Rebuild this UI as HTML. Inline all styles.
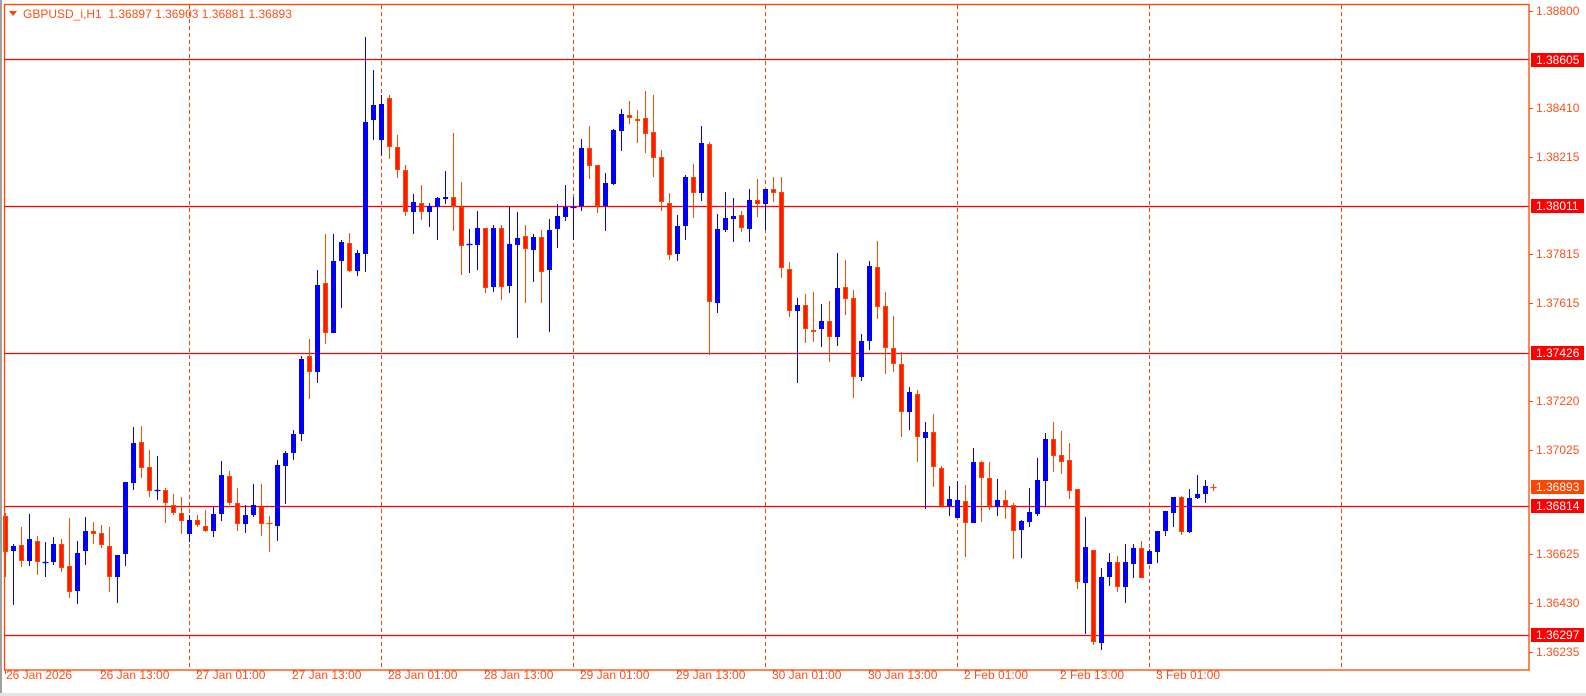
<!DOCTYPE html>
<html><head><meta charset="utf-8"><style>
html,body{margin:0;padding:0;background:#fff;width:1586px;height:696px;overflow:hidden;font-family:"Liberation Sans",sans-serif}
#c{position:absolute;left:0;top:0}
.t{position:absolute;font-size:12px;color:#ff4f1a;white-space:nowrap;line-height:14px}
.b{position:absolute;left:1531px;width:53px;height:14px;background:#ff0000;color:#fff;font-size:12px;line-height:14px;padding-left:5px;box-sizing:border-box}
</style></head><body>
<svg id="c" width="1586" height="696" xmlns="http://www.w3.org/2000/svg">
<rect x="0" y="0" width="2" height="696" fill="#a0a0a0"/>
<rect x="0" y="693" width="1586" height="3" fill="#e4e4e4"/>
<g id="grid" stroke="#ff4500" stroke-width="1" stroke-dasharray="4,3">
<line x1="189.5" y1="5" x2="189.5" y2="670"/><line x1="381.5" y1="5" x2="381.5" y2="670"/><line x1="573.5" y1="5" x2="573.5" y2="670"/><line x1="765.5" y1="5" x2="765.5" y2="670"/><line x1="957.5" y1="5" x2="957.5" y2="670"/><line x1="1149.5" y1="5" x2="1149.5" y2="670"/><line x1="1341.5" y1="5" x2="1341.5" y2="670"/>
</g>
<g stroke="#ff0000" stroke-width="1.3">
<line x1="4" y1="59.5" x2="1529" y2="59.5"/><line x1="4" y1="206.5" x2="1529" y2="206.5"/><line x1="4" y1="353.5" x2="1529" y2="353.5"/><line x1="4" y1="506.5" x2="1529" y2="506.5"/><line x1="4" y1="635.5" x2="1529" y2="635.5"/>
</g>
<g id="cd"></g>
<rect x="4.5" y="4.5" width="1524.5" height="665.5" fill="none" stroke="#ff4500" stroke-width="1.3"/>
<g stroke="#ff4500" stroke-width="1">
<line x1="1529" y1="11.5" x2="1533" y2="11.5"/><line x1="1529" y1="108.5" x2="1533" y2="108.5"/><line x1="1529" y1="157.5" x2="1533" y2="157.5"/><line x1="1529" y1="254.5" x2="1533" y2="254.5"/><line x1="1529" y1="303.5" x2="1533" y2="303.5"/><line x1="1529" y1="401.5" x2="1533" y2="401.5"/><line x1="1529" y1="450.5" x2="1533" y2="450.5"/><line x1="1529" y1="554.5" x2="1533" y2="554.5"/><line x1="1529" y1="603.5" x2="1533" y2="603.5"/><line x1="1529" y1="652.5" x2="1533" y2="652.5"/>
<line x1="5.5" y1="670" x2="5.5" y2="674"/><line x1="101.5" y1="670" x2="101.5" y2="674"/><line x1="197.5" y1="670" x2="197.5" y2="674"/><line x1="293.5" y1="670" x2="293.5" y2="674"/><line x1="389.5" y1="670" x2="389.5" y2="674"/><line x1="485.5" y1="670" x2="485.5" y2="674"/><line x1="581.5" y1="670" x2="581.5" y2="674"/><line x1="677.5" y1="670" x2="677.5" y2="674"/><line x1="773.5" y1="670" x2="773.5" y2="674"/><line x1="869.5" y1="670" x2="869.5" y2="674"/><line x1="965.5" y1="670" x2="965.5" y2="674"/><line x1="1061.5" y1="670" x2="1061.5" y2="674"/><line x1="1157.5" y1="670" x2="1157.5" y2="674"/>
</g>
<polygon points="9,11 17,11 13,16" fill="#ff4500"/>
</svg>
<div class="t" style="left:23px;top:7px">GBPUSD_i,H1&nbsp; 1.36897 1.36903 1.36881 1.36893</div>
<div class="t" style="left:1536px;top:4px">1.38800</div>
<div class="b" style="top:53px">1.38605</div>
<div class="t" style="left:1536px;top:101px">1.38410</div>
<div class="t" style="left:1536px;top:150px">1.38215</div>
<div class="b" style="top:199px">1.38011</div>
<div class="t" style="left:1536px;top:247px">1.37815</div>
<div class="t" style="left:1536px;top:296px">1.37615</div>
<div class="b" style="top:346px">1.37426</div>
<div class="t" style="left:1536px;top:394px">1.37220</div>
<div class="t" style="left:1536px;top:443px">1.37025</div>
<div class="b" style="top:480px;background:#ff4500">1.36893</div>
<div class="b" style="top:499px">1.36814</div>
<div class="t" style="left:1536px;top:547px">1.36625</div>
<div class="t" style="left:1536px;top:596px">1.36430</div>
<div class="b" style="top:628px">1.36297</div>
<div class="t" style="left:1536px;top:645px">1.36235</div>
<div class="t" style="left:6px;top:668px">26 Jan 2026</div>
<div class="t" style="left:100px;top:668px">26 Jan 13:00</div>
<div class="t" style="left:196px;top:668px">27 Jan 01:00</div>
<div class="t" style="left:292px;top:668px">27 Jan 13:00</div>
<div class="t" style="left:388px;top:668px">28 Jan 01:00</div>
<div class="t" style="left:484px;top:668px">28 Jan 13:00</div>
<div class="t" style="left:580px;top:668px">29 Jan 01:00</div>
<div class="t" style="left:676px;top:668px">29 Jan 13:00</div>
<div class="t" style="left:772px;top:668px">30 Jan 01:00</div>
<div class="t" style="left:868px;top:668px">30 Jan 13:00</div>
<div class="t" style="left:964px;top:668px">2 Feb 01:00</div>
<div class="t" style="left:1060px;top:668px">2 Feb 13:00</div>
<div class="t" style="left:1156px;top:668px">3 Feb 01:00</div>
<script>
// [top, bottom, high, low, color]
var A=[[468,500,465,523,'r'],[495,499,493,548,'b'],[494,508,478,514,'r'],[489,508,466,513,'b'],[490,509,486,521,'r'],[509,509,491,523,'b'],[493,509,487,512,'b'],[493,515,489,518,'r'],[513,536,470,542,'r'],[501,535,490,547,'b'],[481,499,469,512,'b'],[481,484,473,493,'r'],[483,494,476,497,'r'],[495,523,478,536,'r'],[503,523,503,546,'b'],[437,502,437,513,'b'],[402,438,388,444,'b'],[401,425,387,434,'r'],[424,445,408,451,'r'],[444,444,414,453,'b'],[444,456,443,474,'r'],[458,465,448,467,'r'],[465,472,451,484,'r'],[471,484,467,491,'b'],[471,476,467,478,'r'],[477,481,462,482,'r'],[466,481,460,487,'b'],[431,466,418,472,'b'],[432,456,427,458,'r'],[456,475,443,481,'r'],[467,475,458,483,'b'],[458,467,439,469,'b'],[460,475,439,486,'r'],[474,474,468,500,'r'],[422,477,417,490,'b'],[411,423,409,457,'b'],[394,411,390,417,'b'],[326,394,324,400,'b'],[324,338,308,362,'r'],[260,338,246,348,'b'],[258,303,214,313,'r'],[238,303,214,303,'b'],[221,238,219,280,'b'],[222,247,213,248,'r'],[231,247,228,252,'b'],[113,232,36,248,'b']];
A=A.map(function(c){var f=function(y){return Math.round(30+(y-30)*1.11)};return [f(c[0]),f(c[1]),f(c[2]),f(c[3]),c[4]];});
var B=[[105,120,70,140,'b'],[104,140,95,156,'b'],[98,147,95,159,'r'],[147,170,135,178,'r'],[170,212,165,216,'r'],[202,212,194,234,'b'],[203,212,185,220,'r'],[206,212,203,227,'b'],[198,207,197,240,'b'],[197,199,171,204,'b'],[197,207,133,231,'r'],[207,246,182,275,'r'],[244,244,229,273,'b'],[228,245,211,270,'b'],[228,288,228,293,'r'],[228,287,225,292,'b'],[228,287,225,300,'r'],[244,286,207,293,'b'],[238,245,212,338,'b'],[236,249,225,303,'r'],[237,250,234,282,'b'],[237,272,230,303,'r'],[230,270,219,332,'b'],[216,229,204,248,'b'],[207,217,185,221,'b'],[207,207,197,240,'b'],[148,206,139,211,'b'],[148,166,126,179,'r'],[165,206,165,213,'r'],[183,206,173,231,'b'],[130,184,129,185,'b'],[114,131,109,151,'b'],[115,118,101,124,'r'],[119,121,110,143,'r'],[118,134,91,153,'r'],[132,158,95,177,'r'],[157,202,150,211,'r'],[203,255,193,260,'r'],[226,254,215,261,'b'],[177,226,175,240,'b'],[177,193,164,218,'r'],[143,193,126,201,'b'],[144,302,142,355,'r'],[229,303,214,313,'b'],[218,230,192,232,'b'],[216,219,198,242,'b'],[215,228,211,232,'r'],[200,229,189,242,'b'],[200,204,179,217,'r'],[189,204,189,230,'b'],
[189,193,177,202,'r'],[192,268,177,278,'r'],[269,311,262,317,'r'],[305,311,298,383,'b'],[305,329,294,343,'r'],[330,332,292,342,'r'],[321,329,304,347,'b'],[321,337,301,362,'r'],[288,337,253,346,'b'],[287,299,260,315,'r'],[298,377,290,398,'r'],[341,377,334,381,'b'],[266,341,261,350,'b'],[267,307,241,319,'r'],[306,348,292,374,'r'],[348,364,316,372,'r'],[364,412,352,437,'r'],[392,412,387,430,'b'],[394,437,390,462,'r'],[432,438,422,509,'b'],[432,467,414,487,'r'],[468,506,466,506,'r'],[499,506,486,516,'b'],[500,518,481,518,'b'],[501,523,485,557,'r'],
[462,523,448,523,'b'],[462,478,461,522,'r'],[478,506,462,510,'r'],[500,507,479,516,'b'],[500,506,490,519,'r'],[505,531,503,559,'r'],[521,530,520,558,'b'],[512,522,488,527,'b'],[480,514,458,516,'b'],[439,481,433,507,'b'],[439,456,422,472,'r'],[455,462,431,474,'r'],[460,491,443,499,'r'],[489,582,489,589,'r'],[547,583,517,634,'b'],[550,642,550,645,'r'],[577,643,568,650,'b'],[562,577,553,586,'b'],[562,587,556,592,'r'],[562,587,544,603,'b'],[548,564,544,578,'b'],[548,578,541,578,'r'],[551,564,549,564,'b'],[531,552,531,563,'b'],[511,531,511,536,'b'],[497,513,497,527,'b'],[497,532,496,535,'r'],[498,532,489,533,'b'],[494,498,475,499,'b'],[486,494,480,503,'b'],[487,487,484,491,'r']];
var D=A.concat(B),s='';
D.forEach(function(c,i){var x=5+8*i+0.5,w=c[4]=='b'?'#0000ff':'#ff4500';
s+='<line x1="'+x+'" y1="'+c[2]+'" x2="'+x+'" y2="'+c[3]+'" stroke="'+w+'" stroke-width="1"/>';
var h=c[1]-c[0];
if(h<2){s+='<line x1="'+(x-3)+'" y1="'+(c[0]+0.5)+'" x2="'+(x+3)+'" y2="'+(c[0]+0.5)+'" stroke="'+w+'" stroke-width="1.3"/>';}
else if(c[4]=='b'){s+='<rect x="'+(x-2.5)+'" y="'+c[0]+'" width="5" height="'+h+'" fill="#0000ff"/>';}
else{s+='<rect x="'+(x-2)+'" y="'+(c[0]+0.5)+'" width="4" height="'+(h-1)+'" fill="#ff1a00" stroke="#ff4500" stroke-width="1"/>';}
});
document.getElementById('cd').innerHTML=s;
</script>
</body></html>
